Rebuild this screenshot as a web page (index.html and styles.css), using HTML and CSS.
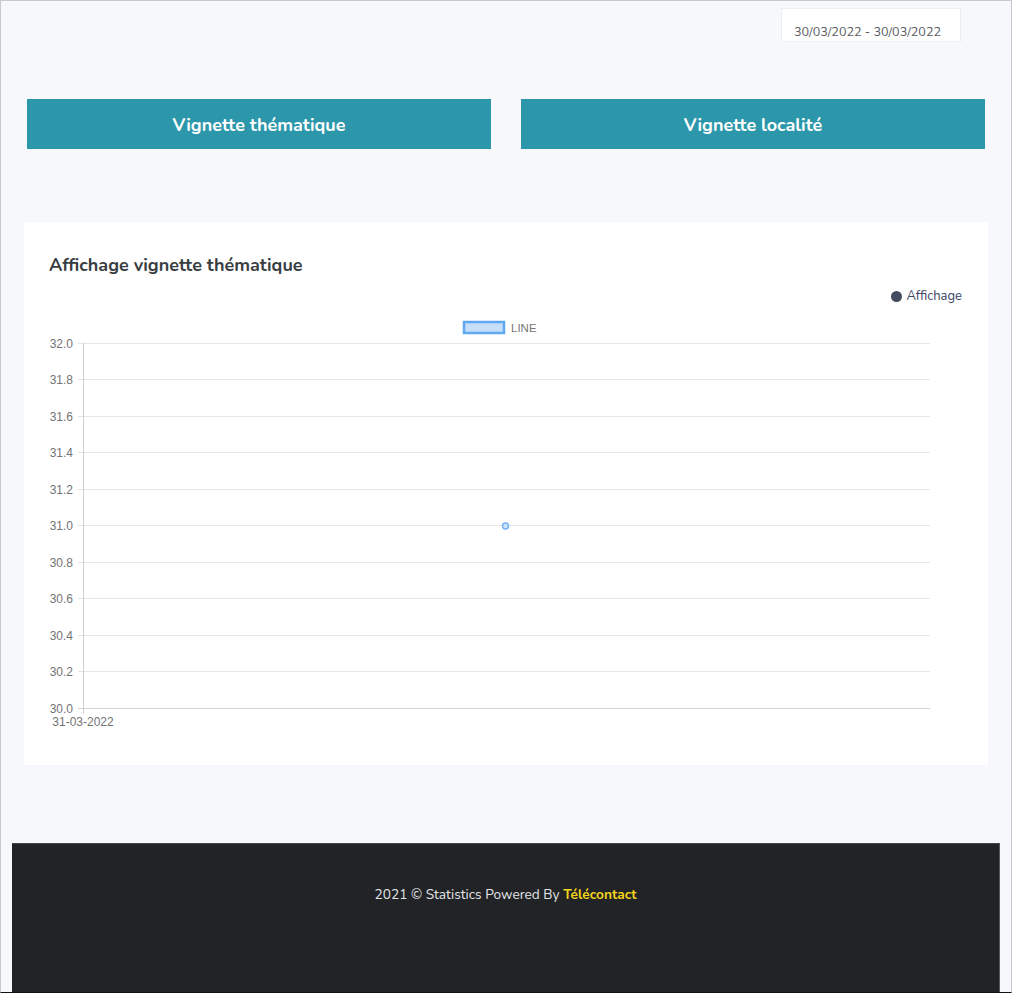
FILE: index.html
```html
<!DOCTYPE html>
<html lang="fr">
<head>
<meta charset="utf-8">
<title>Statistics</title>
<link rel="stylesheet" href="styles.css">
</head>
<body>
<header class="topbar">
  <div class="daterange">30/03/2022 - 30/03/2022</div>
</header>

<nav class="tabs">
  <button class="tab">Vignette thématique</button>
  <button class="tab">Vignette localité</button>
</nav>

<section class="card">
  <div class="card-head">
    <h2 class="card-title">Affichage vignette thématique</h2>
    <div class="legend"><span class="legend-dot"></span>Affichage</div>
  </div>
  <svg class="chart" width="964" height="430" viewBox="0 0 964 430" xmlns="http://www.w3.org/2000/svg">
    <g class="grid" stroke="#e6e6e6" stroke-width="1">
      <line x1="54" y1="33.5" x2="906" y2="33.5"/>
      <line x1="54" y1="69.5" x2="906" y2="69.5"/>
      <line x1="54" y1="106.5" x2="906" y2="106.5"/>
      <line x1="54" y1="142.5" x2="906" y2="142.5"/>
      <line x1="54" y1="179.5" x2="906" y2="179.5"/>
      <line x1="54" y1="215.5" x2="906" y2="215.5"/>
      <line x1="54" y1="252.5" x2="906" y2="252.5"/>
      <line x1="54" y1="288.5" x2="906" y2="288.5"/>
      <line x1="54" y1="325.5" x2="906" y2="325.5"/>
      <line x1="54" y1="361.5" x2="906" y2="361.5"/>
    </g>
    <line x1="54" y1="398.5" x2="906" y2="398.5" stroke="#d4d4d4"/>
    <line x1="59.5" y1="33" x2="59.5" y2="404" stroke="#cfcfcf"/>
    <g class="ylabels" font-family="Liberation Sans, Arial, sans-serif" font-size="12" fill="#737373" text-anchor="end">
      <text x="49" y="37.5">32.0</text>
      <text x="49" y="74">31.8</text>
      <text x="49" y="110.5">31.6</text>
      <text x="49" y="147">31.4</text>
      <text x="49" y="183.5">31.2</text>
      <text x="49" y="220">31.0</text>
      <text x="49" y="256.5">30.8</text>
      <text x="49" y="293">30.6</text>
      <text x="49" y="329.5">30.4</text>
      <text x="49" y="366">30.2</text>
      <text x="49" y="402.5">30.0</text>
    </g>
    <text x="59" y="415.5" font-family="Liberation Sans, Arial, sans-serif" font-size="12" fill="#737373" text-anchor="middle">31-03-2022</text>
    <rect x="440" y="12" width="40" height="11" fill="#c6def8" stroke="#5fa9f3" stroke-width="2.5"/>
    <text x="487" y="21.5" font-family="Liberation Sans, Arial, sans-serif" font-size="11.5" fill="#777">LINE</text>
    <circle cx="481.5" cy="216" r="3" fill="#cfe3fb" stroke="#76b2f3" stroke-width="1.5"/>
  </svg>
</section>

<footer class="footer">
  <p class="footer-text">2021 © Statistics Powered By <span class="brand">Télécontact</span></p>
</footer>
</body>
</html>
```

FILE: styles.css
```css
html {
  margin: 0;
  padding: 0;
}

body {
  margin: 0;
  box-sizing: border-box;
  height: 993px;
  background: #f7f8fc;
  border: 1px solid #c7c8cd;
  border-bottom-color: #111214;
  font-family: "Nunito", Lato, "Open Sans", sans-serif;
  display: flex;
  flex-direction: column;
}

.topbar {
  display: flex;
  justify-content: flex-end;
  padding: 7px 50px 0 0;
}

.daterange {
  box-sizing: border-box;
  width: 180px;
  height: 34px;
  background: #ffffff;
  border: 1px solid #eceef3;
  padding: 15px 0 0 12px;
  font-size: 12.6px;
  line-height: 16px;
  color: #555a60;
}

.tabs {
  display: grid;
  grid-template-columns: 1fr 1fr;
  gap: 30px;
  margin: 57px 26px 0 26px;
}

.tab {
  height: 50px;
  border: none;
  background: #2c97ab;
  color: #ffffff;
  font-family: inherit;
  font-size: 18px;
  font-weight: 700;
  padding: 2px 0 0 0;
  line-height: 48px;
  cursor: pointer;
}

.card {
  margin: 73px 23px 0 23px;
  height: 543px;
  box-sizing: border-box;
  background: #ffffff;
  padding-bottom: 25px;
}

.card-head {
  padding: 33px 26px 0 25px;
}

.card-title {
  margin: 0;
  font-size: 18px;
  line-height: 20px;
  font-weight: 700;
  color: #383d42;
}

.legend {
  margin-top: 13px;
  display: flex;
  justify-content: flex-end;
  align-items: center;
  gap: 4px;
  font-size: 13px;
  line-height: 16px;
  color: #3d4465;
}

.legend-dot {
  width: 11px;
  height: 11px;
  border-radius: 50%;
  background: #434b5f;
}

.chart {
  display: block;
  margin-top: 6px;
}

.footer {
  margin: 78px 11px 0 11px;
  height: 149px;
  box-sizing: border-box;
  background: #212327;
  border-top: 1px solid #44464a;
  border-right: 1px solid #55575b;
  padding-top: 41px;
}

.footer-text {
  margin: 0;
  text-align: center;
  font-size: 13.7px;
  line-height: 20px;
  color: #e4e5e7;
}

.brand {
  color: #f3d51a;
  font-weight: 700;
}
```
